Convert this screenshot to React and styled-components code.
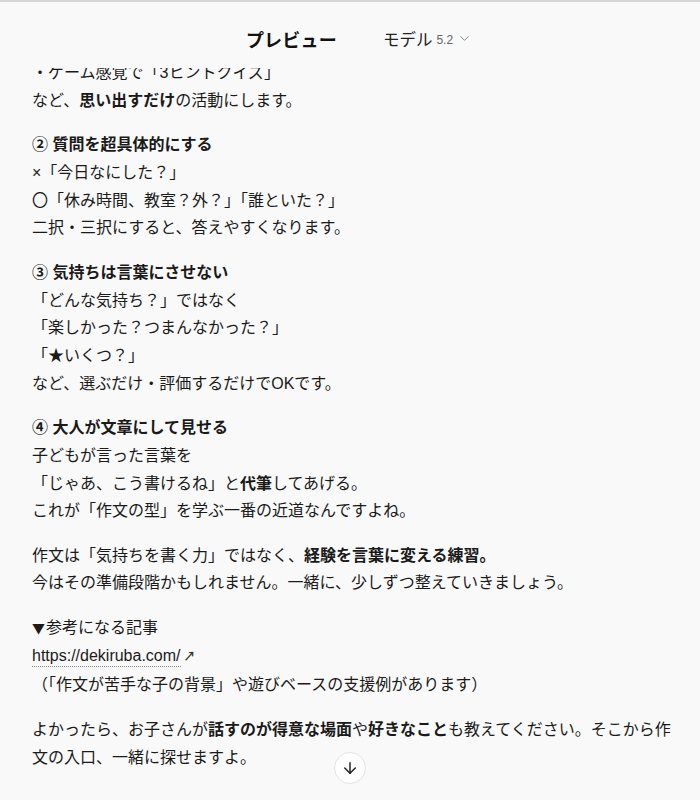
import React from "react";
import styled, { createGlobalStyle } from "styled-components";
import { ChevronDown, ArrowDown } from "lucide-react";

const GlobalStyle = createGlobalStyle`
  html, body {
    margin: 0;
    padding: 0;
    height: 100%;
    background: #f9f9f9;
  }
  body {
    font-family: "Liberation Sans", "Noto Sans CJK JP", sans-serif;
    color: #1a1a1a;
  }
  #root {
    height: 100%;
  }
`;

const Page = styled.div`
  position: relative;
  height: 100vh;
  display: flex;
  flex-direction: column;
  overflow: hidden;
  border-top: 2px solid #d6d6d6;
  box-sizing: border-box;
`;

const Header = styled.header`
  flex: 0 0 66px;
  display: flex;
  align-items: center;
  justify-content: center;
  gap: 46px;
  padding: 7px 0 0 18px;
  box-sizing: border-box;
  background: #f9f9f9;
`;

const Title = styled.h1`
  margin: 0;
  font-size: 18px;
  font-weight: 700;
  letter-spacing: 0.2px;
  color: #111;
`;

const ModelPicker = styled.button`
  display: flex;
  align-items: center;
  gap: 4px;
  padding: 0;
  border: none;
  background: none;
  font-family: inherit;
  font-size: 16.5px;
  color: #222;
  cursor: pointer;
`;

const Version = styled.span`
  font-size: 12px;
  color: #666;
  margin-top: 2px;
`;

const Content = styled.main`
  flex: 1;
  overflow: hidden;
  padding: 0 26px 0 32px;
  font-size: 16px;
  line-height: 27.7px;
`;

const Para = styled.p`
  margin: 0 0 16.8px;
  &:first-child {
    margin-top: -9px;
  }
`;

const Line = styled.span`
  display: block;
`;

const Marker = styled.span`
  display: inline-block;
  font-family: "Noto Sans CJK JP", sans-serif;
  font-size: 13px;
  margin-right: 1px;
`;

const Link = styled.a`
  color: #1a1a1a;
  text-decoration: none;
  border-bottom: 1px dotted #8a8a8a;
  line-height: 20px;
  display: inline-block;
`;

const LinkArrow = styled.span`
  display: inline-block;
  margin-left: 3px;
  font-size: 12px;
  font-weight: 700;
  color: #333;
`;

const ScrollDown = styled.button`
  position: absolute;
  left: 50%;
  bottom: 16px;
  transform: translateX(-50%);
  width: 32px;
  height: 32px;
  border-radius: 50%;
  border: 1px solid #e4e4e4;
  background: #fff;
  display: flex;
  align-items: center;
  justify-content: center;
  padding: 0;
  color: #222;
  cursor: pointer;
`;

export default function App() {
  return (
    <>
      <GlobalStyle />
      <Page>
        <Header>
          <Title>プレビュー</Title>
          <ModelPicker>
            モデル <Version>5.2</Version>
            <ChevronDown size={15} color="#888" strokeWidth={1.6} />
          </ModelPicker>
        </Header>
        <Content>
          <Para>
            <Line>・ゲーム感覚で「3ヒントクイズ」</Line>
            <Line>
              など、<b>思い出すだけ</b>の活動にします。
            </Line>
          </Para>
          <Para>
            <Line>
              <b>② 質問を超具体的にする</b>
            </Line>
            <Line>×「今日なにした？」</Line>
            <Line>〇「休み時間、教室？外？」「誰といた？」</Line>
            <Line>二択・三択にすると、答えやすくなります。</Line>
          </Para>
          <Para>
            <Line>
              <b>③ 気持ちは言葉にさせない</b>
            </Line>
            <Line>「どんな気持ち？」ではなく</Line>
            <Line>「楽しかった？つまんなかった？」</Line>
            <Line>「★いくつ？」</Line>
            <Line>など、選ぶだけ・評価するだけでOKです。</Line>
          </Para>
          <Para>
            <Line>
              <b>④ 大人が文章にして見せる</b>
            </Line>
            <Line>子どもが言った言葉を</Line>
            <Line>
              「じゃあ、こう書けるね」と<b>代筆</b>してあげる。
            </Line>
            <Line>これが「作文の型」を学ぶ一番の近道なんですよね。</Line>
          </Para>
          <Para>
            <Line>
              作文は「気持ちを書く力」ではなく、<b>経験を言葉に変える練習。</b>
            </Line>
            <Line>今はその準備段階かもしれません。一緒に、少しずつ整えていきましょう。</Line>
          </Para>
          <Para>
            <Line>
              <Marker>▼</Marker>参考になる記事
            </Line>
            <Line>
              <Link href="#">https://dekiruba.com/</Link>
              <LinkArrow>↗</LinkArrow>
            </Line>
            <Line>（「作文が苦手な子の背景」や遊びベースの支援例があります）</Line>
          </Para>
          <Para>
            よかったら、お子さんが<b>話すのが得意な場面</b>や<b>好きなこと</b>
            も教えてください。そこから作文の入口、一緒に探せますよ。
          </Para>
        </Content>
        <ScrollDown aria-label="下へスクロール">
          <ArrowDown size={18} strokeWidth={2} />
        </ScrollDown>
      </Page>
    </>
  );
}
